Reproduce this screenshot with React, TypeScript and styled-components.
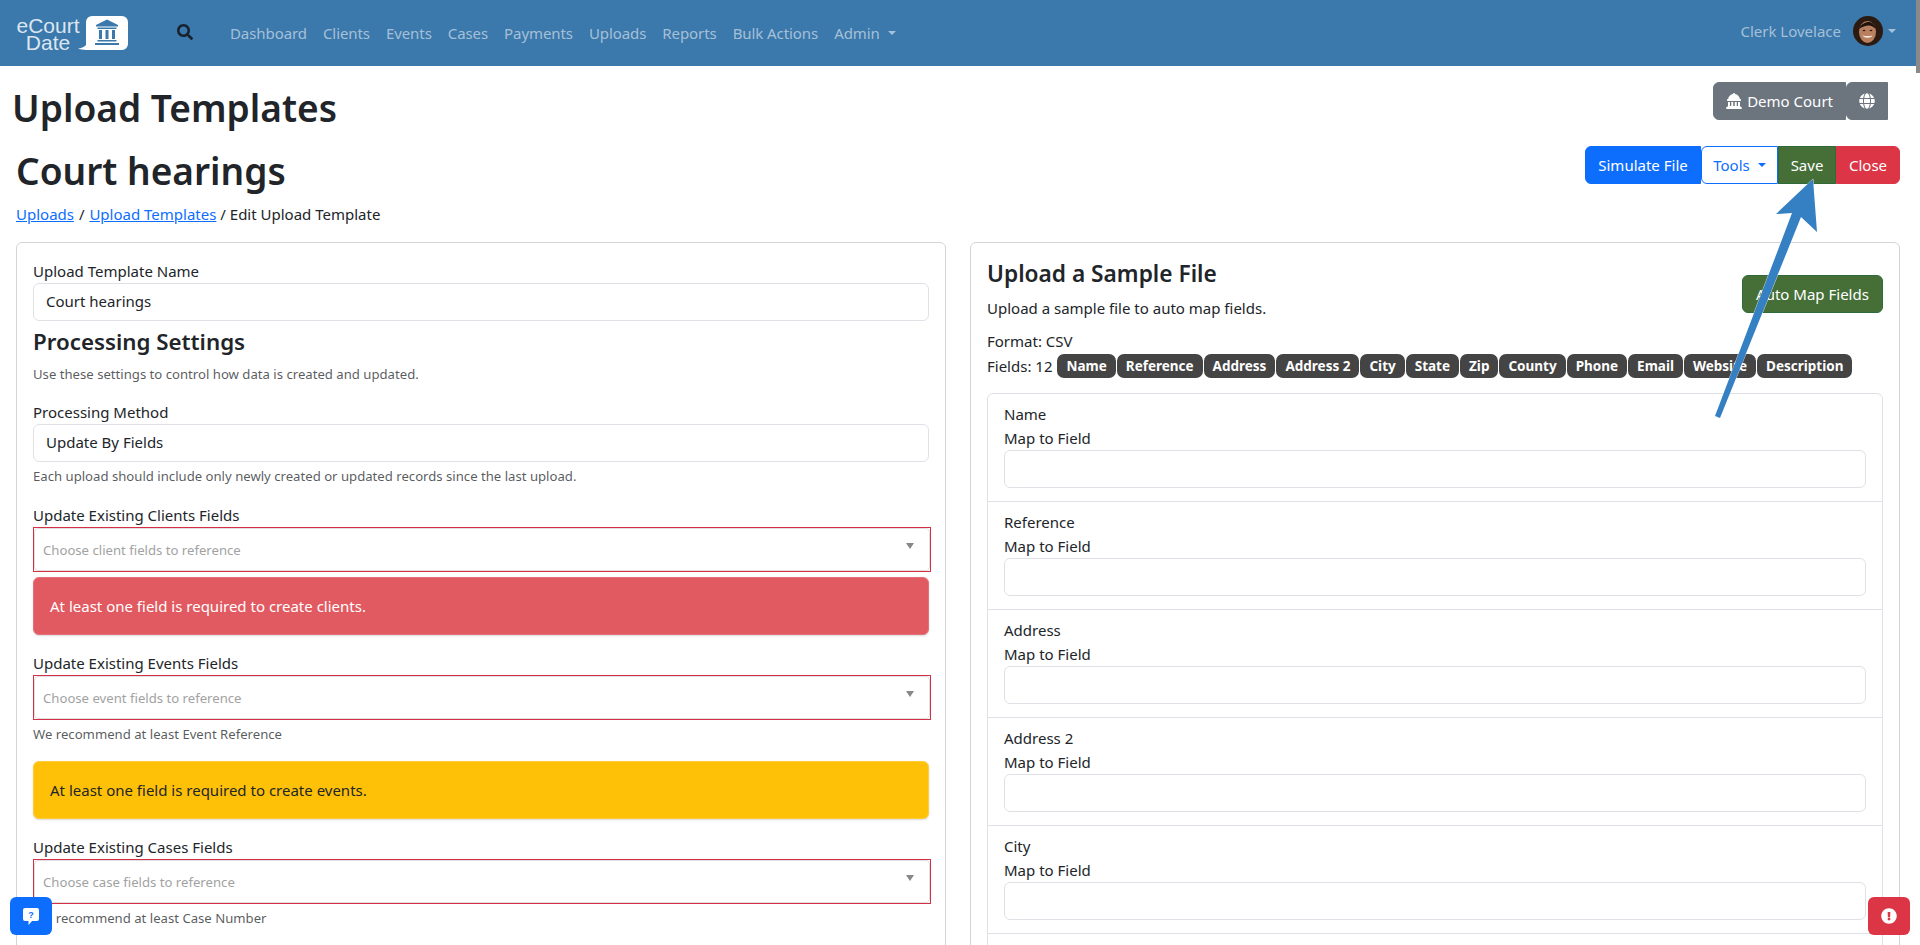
import styled, { createGlobalStyle } from "styled-components";
import { FaGlobe, FaExclamationCircle, FaSearch } from "react-icons/fa";
import { FaLandmarkDome } from "react-icons/fa6";

const GlobalStyle = createGlobalStyle`
  html, body {
    margin: 0;
    height: 945px;
    overflow: hidden;
    background: #fff;
  }
  body {
    font-family: "Noto Sans", "Open Sans", sans-serif;
    font-size: 15px;
    line-height: 24px;
    color: #212529;
  }
  * {
    box-sizing: border-box;
  }
`;

const Page = styled.div`
  position: relative;
  width: 1920px;
  height: 945px;
  overflow: hidden;
`;

const Navbar = styled.header`
  display: flex;
  align-items: center;
  height: 66px;
  padding: 0 24px 0 16px;
  background: #3b78ab;
`;

const Brand = styled.a`
  display: flex;
  align-items: center;
  width: 112px;
  height: 34px;
`;

const BrandText = styled.span`
  width: 64px;
  flex: none;
  margin-top: 2px;
  font-family: "Liberation Sans", Arial, sans-serif;
  font-size: 21px;
  line-height: 17px;
  text-align: center;
  color: #dbe6f0;
`;

const LogoMark = styled.svg`
  flex: none;
  margin-left: -2px;
`;

const SearchButton = styled.span`
  display: flex;
  margin: -2px 0 0 49px;
  font-size: 16px;
  color: #16222e;
`;

const NavLinks = styled.nav`
  display: flex;
  align-items: center;
  margin-left: 29px;
`;

const NavLink = styled.a`
  display: flex;
  align-items: center;
  padding: 0 8px;
  letter-spacing: -0.08px;
  color: rgba(255, 255, 255, 0.55);
`;

const Caret = styled.span<{ $color?: string }>`
  display: inline-block;
  width: 0;
  height: 0;
  margin-left: 8px;
  border-top: 4.8px solid ${(p) => p.$color ?? "rgba(255, 255, 255, 0.55)"};
  border-left: 4.8px solid transparent;
  border-right: 4.8px solid transparent;
`;

const UserMenu = styled.div`
  display: flex;
  align-items: center;
  margin: -4px 0 0 auto;
  color: rgba(255, 255, 255, 0.55);
`;

const Avatar = styled.svg`
  width: 30px;
  height: 30px;
  margin-left: 12px;
  border-radius: 50%;
`;

const UserCaret = styled(Caret)`
  margin-left: 5px;
`;

const TitleRow = styled.div`
  display: flex;
  justify-content: space-between;
  align-items: flex-start;
  height: 64px;
  margin-top: 16px;
  padding: 0 32px 0 12px;
`;

const PageTitle = styled.h1`
  margin: 2px 0 0;
  font-size: 37.1px;
  line-height: 48px;
  font-weight: 600;
`;

const CourtGroup = styled.div`
  display: flex;
`;

const CourtButton = styled.button`
  display: flex;
  align-items: center;
  gap: 5px;
  height: 38px;
  padding: 0 12px;
  border: 1px solid #6c757d;
  border-radius: 6px 0 0 6px;
  background: #6c757d;
  color: #fff;
  font: inherit;
`;

const EditRow = styled.div`
  display: flex;
  justify-content: space-between;
  align-items: flex-start;
  padding: 0 20px 0 16px;
`;

const EditTitle = styled(PageTitle)`
  margin: 1px 0 0;
`;

const ActionGroup = styled.div`
  display: flex;
`;

const ActionButton = styled.button<{ $bg: string; $fg?: string; $border?: string; $width: number; $radius?: string }>`
  display: flex;
  align-items: center;
  justify-content: center;
  width: ${(p) => p.$width}px;
  height: 38px;
  padding: 0;
  border: 1px solid ${(p) => p.$border ?? p.$bg};
  border-radius: ${(p) => p.$radius ?? "0"};
  background: ${(p) => p.$bg};
  color: ${(p) => p.$fg ?? "#fff"};
  font: inherit;
`;

const Breadcrumb = styled.div`
  height: 27px;
  margin-top: 7px;
  padding-left: 16px;

  a {
    color: #0d6efd;
    text-decoration: underline;
  }
`;

const Separator = styled.span<{ $gap?: number }>`
  margin: 0 ${(p) => p.$gap ?? 0}px;
`;

const Columns = styled.div`
  display: grid;
  grid-template-columns: 930px 930px;
  gap: 24px;
  margin-top: 13px;
  padding-left: 16px;
`;

const Card = styled.section`
  min-height: 800px;
  padding: 17px 16px 16px;
  border: 1px solid #d3d5d8;
  border-radius: 6px;
`;

const FieldLabel = styled.div`
  line-height: 23px;
`;

const TextInput = styled.div`
  height: 38px;
  padding: 0 12px;
  border: 1px solid #dee2e6;
  border-radius: 6px;
  line-height: 35px;
  background: #fff;
`;

const SectionTitle = styled.h4`
  margin: 7px 0 8px;
  font-size: 22.3px;
  line-height: 28px;
  font-weight: 600;
`;

const HelpText = styled.div<{ $mb?: number }>`
  margin-top: 4px;
  margin-bottom: ${(p) => p.$mb ?? 16}px;
  font-size: 13.15px;
  line-height: 21px;
  color: rgba(33, 37, 41, 0.75);
`;

const SelectFrame = styled.div`
  position: relative;
  height: 45px;
  margin-right: -2px;
  border: 1px solid #d62f45;
`;

const SelectInner = styled.div`
  display: flex;
  align-items: center;
  height: 43px;
  padding: 0 8px;
  border: 1px solid #e0e0e0;
  border-radius: 4px;
  font-size: 13.15px;
  color: #a2a2a2;
`;

const SelectCaret = styled.span`
  position: absolute;
  right: 16px;
  top: 15px;
  width: 0;
  height: 0;
  border-top: 6px solid #888;
  border-left: 4.5px solid transparent;
  border-right: 4.5px solid transparent;
`;

const Alert = styled.div<{ $bg: string; $fg: string; $border: string }>`
  height: 58px;
  padding: 16px;
  border: 1px solid ${(p) => p.$border};
  border-radius: 6px;
  background: ${(p) => p.$bg};
  color: ${(p) => p.$fg};
  box-shadow: 0 1px 2px rgba(0, 0, 0, 0.15);
`;

const DangerAlert = styled(Alert)`
  margin: 5px 0 17px;
`;

const WarningAlert = styled(Alert)`
  margin-bottom: 17px;
`;

const SampleHead = styled.div`
  display: flex;
  justify-content: space-between;
  align-items: flex-start;
  height: 69px;
`;

const SampleTitle = styled.h4`
  margin: 0 0 8px;
  font-size: 22.7px;
  line-height: 28px;
  font-weight: 600;
`;

const AutoMapButton = styled.button`
  width: 141px;
  height: 38px;
  margin-top: 15px;
  padding: 0;
  border: 1px solid #2f6b3a;
  border-radius: 6px;
  background: #456f37;
  color: #fff;
  font: inherit;
`;

const FieldsRow = styled.div`
  display: flex;
  align-items: center;
  height: 24px;
  margin-top: 1px;
`;

const BadgeList = styled.div`
  display: flex;
  gap: 1px;
  margin-left: 5px;
`;

const Badge = styled.span`
  display: block;
  height: 24px;
  padding: 0 9px;
  border-radius: 7px;
  background: #444;
  color: #fff;
  font-size: 13.5px;
  font-weight: 700;
  line-height: 24px;
`;

const ListGroup = styled.div`
  min-height: 700px;
  margin-top: 15px;
  border: 1px solid #dee2e6;
  border-radius: 6px;
`;

const ListItem = styled.div`
  height: 108px;
  padding: 8px 16px 0;
  border-bottom: 1px solid #dee2e6;
`;

const ItemLabel = styled.div`
  line-height: 24px;
`;

const FloatingButton = styled.button<{ $bg: string }>`
  position: absolute;
  top: 897px;
  display: flex;
  align-items: center;
  justify-content: center;
  width: 42px;
  height: 38px;
  padding: 0;
  border: 0;
  border-radius: 6px;
  background: ${(p) => p.$bg};
  color: #fff;
  font-size: 16px;
`;

const HelpButton = styled(FloatingButton)`
  left: 10px;
`;

const AlertButton = styled(FloatingButton)`
  right: 10px;
`;

const ScrollThumb = styled.div`
  position: absolute;
  top: 0;
  right: 0;
  width: 4px;
  height: 73px;
  background: #8a8a8a;
`;

const ArrowOverlay = styled.svg`
  position: absolute;
  left: 0;
  top: 0;
  pointer-events: none;
`;

const Logo = () => (
  <LogoMark width="50" height="34" viewBox="0 0 50 34">
    <path
      d="M14 0h30a6 6 0 0 1 6 6v22a6 6 0 0 1-6 6H8c-2 0-6-.4-8-1.400 3 0 6-1.600 8-3.600V6a6 6 0 0 1 6-6z"
      fill="#fff"
    />
    <g fill="#3b78ab">
      <path d="M29 3.500l11 5.500v1.500H18V9z" />
      <path d="M19.500 11.500h19v1.500h-19z" />
      <path d="M21 14h3v9h-3zM27.500 14h3v9h-3zM34 14h3v9h-3z" />
      <path d="M19.500 24h19v1.500h-19zM17 27h24v2H17z" />
    </g>
  </LogoMark>
);

const AvatarFace = () => (
  <Avatar viewBox="0 0 30 30">
    <rect width="30" height="30" fill="#2a1a12" />
    <ellipse cx="14.500" cy="16" rx="8.500" ry="11" fill="#b9805f" />
    <path d="M6 13c2-5 6-7 9.500-7s6 2.500 7.500 7c-3-2.500-5-3.500-7.500-3.500S9 11 6 13z" fill="#21130c" />
    <ellipse cx="11" cy="14.500" rx="1.400" ry=".8" fill="#2a1a12" />
    <ellipse cx="18" cy="14.500" rx="1.400" ry=".8" fill="#2a1a12" />
    <path d="M9.500 19.500c2 3 8 3 10 0-3 .8-7 .8-10 0z" fill="#f6eee6" />
  </Avatar>
);

const BubbleIcon = () => (
  <svg width="16" height="17" viewBox="0 0 16 17">
    <path d="M2 0h12a2 2 0 0 1 2 2v9a2 2 0 0 1-2 2H9l-3.500 4V13H2a2 2 0 0 1-2-2V2a2 2 0 0 1 2-2z" fill="#fff" />
    <text x="8" y="10" fontSize="9" fontFamily="Liberation Sans" fontWeight="700" textAnchor="middle" fill="#0d6efd">
      ?
    </text>
  </svg>
);

const navItems = ["Dashboard", "Clients", "Events", "Cases", "Payments", "Uploads", "Reports", "Bulk Actions"];
const sampleFields = [
  "Name",
  "Reference",
  "Address",
  "Address 2",
  "City",
  "State",
  "Zip",
  "County",
  "Phone",
  "Email",
  "Website",
  "Description",
];

const App = () => {
  return (
    <Page>
      <GlobalStyle />
      <Navbar>
        <Brand>
          <BrandText>
            eCourt
            <br />
            Date
          </BrandText>
          <Logo />
        </Brand>
        <SearchButton>
          <FaSearch />
        </SearchButton>
        <NavLinks>
          {navItems.map((item) => (
            <NavLink key={item}>{item}</NavLink>
          ))}
          <NavLink>
            Admin
            <Caret />
          </NavLink>
        </NavLinks>
        <UserMenu>
          Clerk Lovelace
          <AvatarFace />
          <UserCaret />
        </UserMenu>
      </Navbar>

      <TitleRow>
        <PageTitle>Upload Templates</PageTitle>
        <CourtGroup>
          <CourtButton>
            <FaLandmarkDome size={16} />
            Demo Court
          </CourtButton>
          <CourtButton>
            <FaGlobe size={16} />
          </CourtButton>
        </CourtGroup>
      </TitleRow>

      <EditRow>
        <EditTitle>Court hearings</EditTitle>
        <ActionGroup>
          <ActionButton $bg="#0d6efd" $width={116} $radius="6px 0 0 6px">
            Simulate File
          </ActionButton>
          <ActionButton $bg="#fff" $fg="#0d6efd" $border="#0d6efd" $width={77} $radius="6px 0 0 6px">
            Tools
            <Caret $color="#0d6efd" />
          </ActionButton>
          <ActionButton $bg="#456f37" $border="#2f6b3a" $width={58}>
            Save
          </ActionButton>
          <ActionButton $bg="#dc3545" $width={64} $radius="0 6px 6px 0">
            Close
          </ActionButton>
        </ActionGroup>
      </EditRow>
      <Breadcrumb>
        <a>Uploads</a> <Separator $gap={1}>/</Separator> <a>Upload Templates</a> <Separator>/</Separator> Edit Upload
        Template
      </Breadcrumb>

      <Columns>
        <Card>
          <FieldLabel>Upload Template Name</FieldLabel>
          <TextInput>Court hearings</TextInput>
          <SectionTitle>Processing Settings</SectionTitle>
          <HelpText>Use these settings to control how data is created and updated.</HelpText>
          <FieldLabel>Processing Method</FieldLabel>
          <TextInput>Update By Fields</TextInput>
          <HelpText $mb={17}>Each upload should include only newly created or updated records since the last upload.</HelpText>
          <FieldLabel>Update Existing Clients Fields</FieldLabel>
          <SelectFrame>
            <SelectInner>Choose client fields to reference</SelectInner>
            <SelectCaret />
          </SelectFrame>
          <DangerAlert $bg="#e25a61" $fg="#fff" $border="#e57178">
            At least one field is required to create clients.
          </DangerAlert>
          <FieldLabel>Update Existing Events Fields</FieldLabel>
          <SelectFrame>
            <SelectInner>Choose event fields to reference</SelectInner>
            <SelectCaret />
          </SelectFrame>
          <HelpText>We recommend at least Event Reference</HelpText>
          <WarningAlert $bg="#ffc107" $fg="#212529" $border="#ffcd39">
            At least one field is required to create events.
          </WarningAlert>
          <FieldLabel>Update Existing Cases Fields</FieldLabel>
          <SelectFrame>
            <SelectInner>Choose case fields to reference</SelectInner>
            <SelectCaret />
          </SelectFrame>
          <HelpText>We recommend at least Case Number</HelpText>
        </Card>

        <Card>
          <SampleHead>
            <div>
              <SampleTitle>Upload a Sample File</SampleTitle>
              <div>Upload a sample file to auto map fields.</div>
            </div>
            <AutoMapButton>Auto Map Fields</AutoMapButton>
          </SampleHead>
          <div>Format: CSV</div>
          <FieldsRow>
            Fields: 12
            <BadgeList>
              {sampleFields.map((field) => (
                <Badge key={field}>{field}</Badge>
              ))}
            </BadgeList>
          </FieldsRow>
          <ListGroup>
            {sampleFields.slice(0, 5).map((field) => (
              <ListItem key={field}>
                <ItemLabel>{field}</ItemLabel>
                <ItemLabel>Map to Field</ItemLabel>
                <TextInput />
              </ListItem>
            ))}
          </ListGroup>
        </Card>
      </Columns>

      <HelpButton $bg="#0d6efd">
        <BubbleIcon />
      </HelpButton>
      <AlertButton $bg="#dc3545">
        <FaExclamationCircle />
      </AlertButton>
      <ScrollThumb />
      <ArrowOverlay width="1920" height="945" viewBox="0 0 1920 945">
        <path
          d="M1715 416l5 2 81-201 16 15-4-53-37 35 16-1z"
          fill="#3580c3"
          stroke="#fff"
          strokeOpacity="0.7"
          strokeWidth="1"
          paintOrder="stroke"
        />
      </ArrowOverlay>
    </Page>
  );
};

export default App;
